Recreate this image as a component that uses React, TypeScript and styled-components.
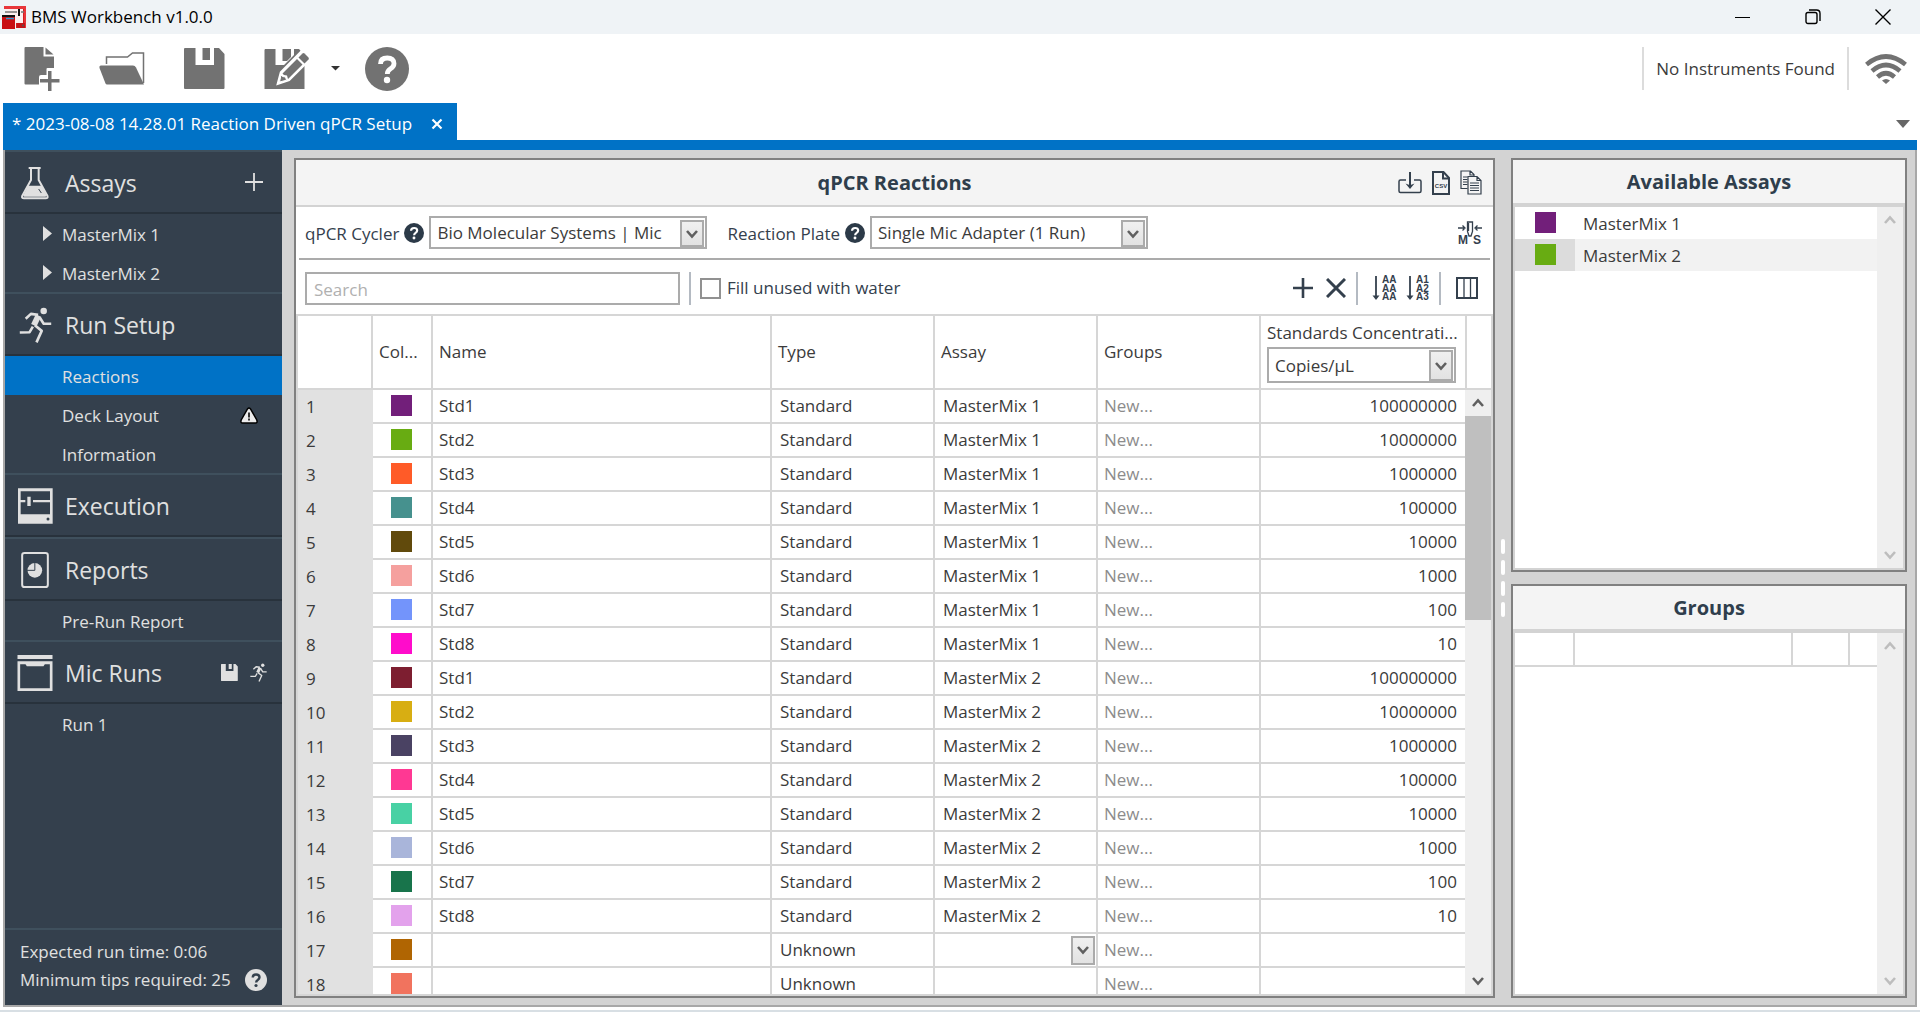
import React from "react";
import styled, { createGlobalStyle } from "styled-components";

const color = {
  accent: "#0072c6",
  navy: "#34404d",
  pale: "#e0e0e0",
  icon: "#727272",
  line: "#d3d3d3",
  field: "#ababab",
  frame: "#808080",
  text: "#3b3b3b",
};

const GlobalStyle = createGlobalStyle`
  *, *::before, *::after { box-sizing: border-box; }
  html, body, #root { height: 100%; }
  body { margin: 0; overflow: hidden; background: #fff; }
  body, button, input, select {
    font-family: "Open Sans", "Noto Sans", sans-serif;
    font-size: 17px;
    line-height: 24px;
    color: ${color.text};
  }
  button, input, select { margin: 0; padding: 0; border: 0; border-radius: 0; background: none; }
  svg { display: block; flex: none; }
  h1, h2, p, ul { margin: 0; padding: 0; font-size: inherit; font-weight: inherit; }
  ul { list-style: none; }
`;

const Window = styled.div`
  display: flex;
  flex-direction: column;
  height: 100vh;
  border-bottom: 2px solid #d8dfe4;
`;

const TitleBar = styled.header`
  display: flex;
  align-items: center;
  height: 34px;
  padding: 0 2px;
  gap: 5px;
  background: #eff3f6;
  color: #000;
  flex: none;
`;

const AppName = styled.h1`
  flex: 1;
`;

const WindowControls = styled.div`
  display: flex;
`;

const WindowButton = styled.button`
  display: grid;
  place-items: center;
  width: 70px;
  height: 34px;
`;

const Toolbar = styled.div`
  display: flex;
  align-items: center;
  height: 69px;
  padding-left: 20px;
  flex: none;
`;

const ToolButton = styled.button<{ $w: number; $gap?: number }>`
  display: grid;
  place-items: center;
  width: ${(p) => p.$w}px;
  height: 52px;
  margin-right: ${(p) => p.$gap ?? 0}px;
`;

const Status = styled.div`
  display: flex;
  align-items: center;
  height: 43px;
  margin-left: auto;
  border: solid #dcdcdc;
  border-width: 0 2px;
  padding: 0 12px;
`;

const Signal = styled.div`
  padding: 0 13px 0 16px;
`;

const TabStrip = styled.nav`
  display: flex;
  align-items: stretch;
  height: 47px;
  margin: 0 3px;
  border-bottom: 10px solid ${color.accent};
  flex: none;
`;

const Tab = styled.div`
  display: flex;
  align-items: center;
  width: 454px;
  padding: 4px 14px 0 9px;
  justify-content: space-between;
  background: ${color.accent};
  color: #fff;
  white-space: nowrap;
`;

const TabMenu = styled.button`
  margin-left: auto;
  padding: 4px 7px 0;
`;

const Workspace = styled.main`
  display: grid;
  grid-template-columns: 277px minmax(0, 1fr) 396px;
  grid-template-rows: minmax(0, 1fr);
  flex: 1;
  min-height: 0;
  margin: 0 3px 3px;
  border: 2px solid #a8a8a8;
  border-top: 0;
  background: ${color.line};
  padding-right: 8px;
`;

/* Sidebar */

const Sidebar = styled.aside`
  display: flex;
  flex-direction: column;
  background: ${color.navy};
  color: ${color.pale};
`;

const SectionHead = styled.div`
  display: flex;
  align-items: center;
  height: 64px;
  border-top: 2px solid #3f505d;
  border-bottom: 2px solid #28323c;
  padding-right: 9px;
`;

const SectionIcon = styled.span`
  display: grid;
  place-items: center;
  width: 60px;
  padding-top: 1px;
`;

const SectionName = styled.h2`
  flex: 1;
  font-size: 23px;
  line-height: 32px;
  padding-top: 2px;
`;

const SideButton = styled.button<{ $w?: number }>`
  display: grid;
  place-items: center;
  width: ${(p) => p.$w ?? 29}px;
  height: 32px;
`;

const SideItem = styled.a<{ $active?: boolean }>`
  display: flex;
  align-items: center;
  height: 39px;
  padding: 2px 24px 0 33px;
  color: ${color.pale};
  text-decoration: none;
  background: ${(p) => (p.$active ? color.accent : "transparent")};
`;

const Marker = styled.span`
  width: 24px;
  flex: none;
`;

const ItemText = styled.span`
  flex: 1;
`;

const SideFooter = styled.footer`
  margin-top: auto;
  height: 77px;
  border-top: 2px solid #3f505d;
  padding: 8px 15px 0 15px;
  line-height: 28px;
`;

const FooterLine = styled.p`
  display: flex;
  align-items: center;
  justify-content: space-between;
`;

/* Panels */

const Center = styled.div`
  display: grid;
  grid-template-columns: minmax(0, 1fr) 16px;
  padding: 8px 0 7px 12px;
  min-height: 0;
`;

const Panel = styled.section`
  display: flex;
  flex-direction: column;
  min-height: 0;
  border: 2px solid ${color.frame};
  background: #fff;
`;

const PanelHead = styled.div<{ $rule: number }>`
  display: grid;
  grid-template-columns: 1fr auto 1fr;
  align-items: center;
  height: 47px;
  border-bottom: ${(p) => p.$rule}px solid ${color.line};
  background: #f4f4f4;
  flex: none;
`;

const PanelTitle = styled.h2`
  grid-column: 2;
  padding-top: 1px;
  font-size: 20px;
  font-weight: 700;
  color: #2f3e4c;
  line-height: 28px;
`;

const HeadActions = styled.div`
  display: flex;
  justify-content: flex-end;
  gap: 6px;
  padding-right: 10px;
`;

const IconButton = styled.button<{ $w?: number }>`
  display: grid;
  place-items: center;
  width: ${(p) => p.$w ?? 24}px;
  height: 28px;
`;

const Options = styled.div`
  display: flex;
  align-items: center;
  gap: 20px;
  height: 53px;
  margin: 0 3px;
  padding: 0 8px 0 6px;
  border-bottom: 2px solid ${color.field};
  flex: none;
  color: ${color.navy};
`;

const OptionField = styled.div`
  display: flex;
  align-items: center;
  gap: 5px;
`;

const OptionLabel = styled.label`
  padding-top: 2px;
  white-space: nowrap;
`;

const SelectBox = styled.span<{ $w?: number; $h: number; $bare?: boolean }>`
  display: grid;
  grid-template-columns: 1fr auto;
  align-items: ${(p) => (p.$bare ? "center" : "end")};
  width: ${(p) => (p.$w ? `${p.$w}px` : "100%")};
  height: ${(p) => p.$h}px;
  padding-right: 1px;
  border: ${(p) => (p.$bare ? "0" : `2px solid ${color.field}`)};
  background: #fff;
`;

const NativeSelect = styled.select`
  grid-area: 1 / 1 / 2 / 3;
  align-self: stretch;
  width: 100%;
  padding: 1px 0 0 6px;
  appearance: none;
  outline: 0;
`;

const DropArrow = styled.span<{ $h: number }>`
  grid-area: 1 / 2;
  display: grid;
  place-items: center;
  width: 24px;
  height: ${(p) => p.$h}px;
  border: 2px solid ${color.field};
  background: linear-gradient(#f0f0f0, #e2e2e2);
  pointer-events: none;
`;

const Filters = styled.div`
  display: flex;
  align-items: center;
  height: 54px;
  padding: 2px 9px 0 9px;
  flex: none;
`;

const SearchBox = styled.input`
  width: 375px;
  height: 33px;
  padding: 2px 7px 0;
  border: 2px solid ${color.field};
  &::placeholder { color: #b0b0b0; opacity: 1; }
`;

const Rule = styled.span<{ $before?: number }>`
  width: 2px;
  height: 33px;
  margin: 0 9px 0 ${(p) => p.$before ?? 9}px;
  background: #b4bac2;
`;

const CheckLabel = styled.label`
  display: flex;
  align-items: center;
  gap: 6px;
  color: ${color.navy};
`;

const Check = styled.input`
  appearance: none;
  width: 21px;
  height: 21px;
  border: 2px solid #919191;
  background: #fff;
`;

const Actions = styled.div`
  display: flex;
  align-items: center;
  margin-left: auto;
`;

/* Reactions table */

const GridFrame = styled.div`
  display: flex;
  flex: 1;
  min-height: 0;
  border: 2px solid #d6d6d6;
`;

const GridClip = styled.div`
  flex: 1;
  min-width: 0;
  overflow: hidden;
`;

const Table = styled.table`
  width: 100%;
  table-layout: fixed;
  border-collapse: separate;
  border-spacing: 0;
  line-height: 16px;
`;

const Col = styled.col<{ $w?: number }>`
  width: ${(p) => (p.$w ? `${p.$w}px` : "auto")};
`;

const Th = styled.th`
  height: 74px;
  padding: 0 6px;
  border: solid #d6d6d6;
  border-width: 0 2px 2px 0;
  text-align: left;
  font-weight: 400;
  white-space: nowrap;
  &:last-child { border-right: 0; padding-right: 9px; }
`;

const UnitLabel = styled.label`
  display: block;
  line-height: 24px;
  padding-bottom: 2px;
`;

const RowHead = styled.th`
  height: 34px;
  padding: 0 0 0 8px;
  background: #e1e1e1;
  text-align: left;
  font-weight: 400;
`;

const Td = styled.td<{ $muted?: boolean; $pad?: number }>`
  height: 34px;
  padding: 0 0 0 ${(p) => p.$pad ?? 8}px;
  border: solid #d6d6d6;
  border-width: 0 2px 2px 0;
  color: ${(p) => (p.$muted ? "#8c8c8c" : color.text)};
  white-space: nowrap;
  &:last-child { border-right: 0; padding-right: 8px; text-align: right; }
`;

const SwatchTd = styled(Td)`
  padding: 5px 0 0 18px;
  vertical-align: top;
`;

const Swatch = styled.span<{ $c: string }>`
  display: block;
  width: 21px;
  height: 21px;
  background: ${(p) => p.$c};
`;

const ScrollSide = styled.div`
  display: flex;
  flex-direction: column;
  width: 26px;
  flex: none;
`;

const ScrollHead = styled.div`
  height: 74px;
  border: solid #d6d6d6;
  border-width: 0 0 2px 2px;
  flex: none;
`;

const ScrollTrack = styled.div`
  display: flex;
  flex-direction: column;
  flex: 1;
  background: #efefef;
`;

const ScrollButton = styled.button`
  display: grid;
  place-items: center;
  width: 26px;
  height: 26px;
  flex: none;
`;

const ThumbArea = styled.div`
  flex: 1;
  min-height: 0;
`;

const Thumb = styled.div`
  height: 37%;
  background: #bfbfbf;
`;

const Splitter = styled.div`
  display: flex;
  flex-direction: column;
  align-items: center;
  justify-content: center;
  gap: 6px;
`;

const Grip = styled.span`
  width: 4px;
  height: 15px;
  border-radius: 2px;
  background: #fff;
`;

const RightColumn = styled.div`
  display: grid;
  grid-template-rows: 1fr 1fr;
  gap: 12px;
  padding: 8px 0 7px;
  min-height: 0;
`;

const SideList = styled.div`
  display: flex;
  flex: 1;
  min-height: 0;
  border: 2px solid ${color.line};
  border-top: 0;
`;

const AssayList = styled.ul`
  flex: 1;
`;

const AssayRow = styled.li<{ $on?: boolean }>`
  display: flex;
  height: 32px;
  background: ${(p) => (p.$on ? "#f2f2f2" : "#fff")};
`;

const AssayKey = styled.span<{ $on?: boolean }>`
  display: flex;
  width: 60px;
  padding: 5px 0 0 20px;
  background: ${(p) => (p.$on ? "#dcdcdc" : "transparent")};
`;

const AssayName = styled.span`
  padding: 5px 0 0 8px;
`;

const GroupsGrid = styled.div`
  flex: 1;
`;

const GroupTh = styled.th`
  height: 34px;
  padding: 0;
  border: solid #d6d6d6;
  border-width: 0 2px 2px 0;
  &:last-child { border-right: 0; }
`;

/* Icons */

const Chevron = ({ up, faint }: { up?: boolean; faint?: boolean }) => (
  <svg width="12" height="10" viewBox="0 0 12 10" fill="none" stroke={faint ? "#bdbdbd" : "#606060"} strokeWidth="2.6">
    <path d={up ? "M1 8l5-5.5L11 8" : "M1 2l5 5.5L11 2"} />
  </svg>
);

const AppIcon = () => (
  <svg width="24" height="24" viewBox="0 0 24 24">
    <path d="M2 1h21v22h-9v-5h6V4H2z" fill="#d61b1f" />
    <path d="M4 3h17v15H4z" fill="#fbeff0" />
    <path d="M2 1h22v3H2zM22 2h2v21h-2z" fill="#e8363a" />
    <path d="M0 12h13v12H0z" fill="#c90f13" />
    <path d="M3 7h12M19 7h3" stroke="#777" strokeWidth="1.5" />
    <path d="M0 11h13" stroke="#111" strokeWidth="2" />
    <path d="M17 4v7" stroke="#111" strokeWidth="2" />
    <path d="M4 13.500h8" stroke="#2a9bd6" strokeWidth="1.500" />
    <path d="M15 18h8v5h-8z" fill="#c31519" />
    <circle cx="21" cy="20.500" r="1" fill="#555" />
  </svg>
);

const NewFileIcon = () => (
  <svg width="36" height="46" viewBox="0 0 36 46" fill={color.icon}>
    <path d="M1.500 1h18v9.500H30V22h-6.500q-1 0-1 1v6H17q-2 0-2 2v7.500H1.500Q.5 38.500.5 37.500V2Q.5 1 1.500 1z" />
    <path d="M21.500 1.500l8 7h-8z" />
    <path d="M24 25h3.500v8h8v3.500h-8V45H24v-8.500h-8V33h8z" />
  </svg>
);

const FolderIcon = () => (
  <svg width="46" height="34" viewBox="0 0 46 34">
    <path d="M7.500 12V5h21l5-4h11v30" fill="none" stroke={color.icon} strokeWidth="1.500" />
    <path d="M2 13.500h32q2 0 3 2L45 32.500H8q-1 0-1.500-1L.5 16q-.5-2.500 1.500-2.500z" fill={color.icon} />
  </svg>
);

const SaveIcon = ({ s = 41, c = color.icon }: { s?: number; c?: string }) => (
  <svg width={s} height={s} viewBox="0 0 41 41" fill={c}>
    <path d="M1 0h10.500v17H30V0h5l5.500 6v34Q40.500 41 39.500 41H1Q0 41 0 40V1Q0 0 1 0z" />
    <path d="M18.500 0H26v12h-7.500z" />
  </svg>
);

const SaveEditIcon = () => (
  <svg width="46" height="42" viewBox="0 0 46 42">
    <path d="M1 1h10.500v16H20l10-10V1h5l5.500 6v34H.5V2z" fill={color.icon} />
    <path d="M18.500 1H27v8l-4 4h-4.500z" fill={color.icon} />
    <path d="M14 35.500l3-11L37.500 3.500l8 8L25 32z" fill="#fff" stroke="#fff" strokeWidth="2.500" />
    <path d="M18.500 25.500L33 11l5.500 5.500L24 31l-1-3.500-3-.5z" fill={color.icon} />
    <path d="M34.500 9.500l4-4q1-1 2 0l4 4q.7 1 0 2l-4 4z" fill={color.icon} />
    <path d="M17 27l-1.500 7 7-1.800-1-3.200-3-.5z" fill={color.icon} stroke="#fff" />
  </svg>
);

const HelpIcon = ({ size, bg, fg }: { size: number; bg: string; fg: string }) => (
  <svg width={size} height={size} viewBox="0 0 44 44">
    <circle cx="22" cy="22" r="22" fill={bg} />
    <path d="M15.500 17q0-6 6.800-6 6.700 0 6.700 5.500 0 3-3.500 5.300-3.200 2-3.200 5.200" fill="none" stroke={fg} strokeWidth="4.800" />
    <circle cx="22" cy="33" r="3.200" fill={fg} />
  </svg>
);

const Runner = ({ w, h }: { w: number; h: number }) => (
  <svg width={w} height={h} viewBox="50 496 100 110" fill="none" stroke={color.pale} strokeWidth="8" strokeLinejoin="round">
    <circle cx="125" cy="508" r="10" fill={color.pale} stroke="none" />
    <path d="M70 532L86 517l22 3M113 528l12 19h23M92 556l-10 17-30 1M98 552l21 17-16 35" />
    <path d="M109 522L95 552" strokeWidth="18" />
  </svg>
);

const Flask = () => (
  <svg width="28" height="34" viewBox="64 75 84 102" fill="none" stroke={color.pale} strokeWidth="6">
    <path d="M87 81h36M94 82v35L68 164q-3 8 5 8h65q8 0 5-8l-26-47V82" />
    <path d="M86 134h40l14 28q1 5-3 5H74q-4 0-3-4z" fill={color.pale} stroke="none" />
    <path d="M117 144l8 12" stroke={color.navy} strokeWidth="3" />
  </svg>
);

const ExecutionIcon = () => (
  <svg width="35" height="36" viewBox="52 51 105 108" fill={color.pale}>
    <path d="M52 52h104v106H52zM60 61v69h88V61z" fillRule="evenodd" />
    <path d="M56 87h18v7H56zM97 87h55v7H97zM80 77h10v28H80z" />
    <circle cx="142" cy="144" r="4.500" fill={color.navy} />
  </svg>
);

const ReportIcon = () => (
  <svg width="28" height="36" viewBox="64 243 83 108">
    <rect x="67" y="246" width="77" height="102" rx="7" fill="none" stroke={color.pale} strokeWidth="6" />
    <circle cx="105" cy="298" r="22" fill={color.pale} />
    <path d="M105 274v24H81" fill="none" stroke={color.navy} strokeWidth="3" />
  </svg>
);

const MicIcon = () => (
  <svg width="36" height="36" viewBox="53 552 107 108" fill={color.pale}>
    <path d="M54 552h105v12H54zM54 571h105v89H54zM62 580v72h89v-72h-15l-4 6H82l-4-6z" fillRule="evenodd" />
  </svg>
);

const WarningIcon = () => (
  <svg width="18" height="17" viewBox="0 0 18 17">
    <path d="M7.500 2q1.500-2 3 0L16.800 13q1 3-1.300 3h-13Q.2 16 1.200 13z" fill="#ececec" stroke="#000" strokeWidth="1.500" />
    <path d="M9 5.500v5M9 11.500v2" stroke="#222" strokeWidth="1.800" />
  </svg>
);

const WifiIcon = () => (
  <svg width="42" height="30" viewBox="0 0 42 30" fill="none" stroke={color.icon} strokeWidth="4.600">
    <path d="M1.500 10.500Q21-5.500 40.500 10.500M7 17q14-12 28 0M12.500 23Q21 15.500 29.500 23" />
    <path d="M17 26.500q4-3 8 0L21 30z" fill={color.icon} stroke="none" />
  </svg>
);

const ImportIcon = () => (
  <svg width="24" height="22" viewBox="0 0 24 22" fill="none" stroke={color.navy} strokeWidth="1.500">
    <path d="M8 8H2.500Q1 8 1 9.500V19q0 1.500 1.500 1.500h19Q23 20.500 23 19V9.500Q23 8 21.500 8H16" />
    <path d="M12 0v14" strokeWidth="2" />
    <path d="M7.500 11.500L12 17l4.500-5.500-4.500 1.800z" fill={color.navy} stroke="none" />
  </svg>
);

const CsvIcon = () => (
  <svg width="18" height="24" viewBox="0 0 18 24">
    <path d="M1 1h10.500L17 7v16H1z" fill="none" stroke={color.navy} strokeWidth="2" />
    <path d="M11 1v6.500h6" fill="none" stroke={color.navy} strokeWidth="2" />
    <text x="9" y="17" textAnchor="middle" fontFamily="Liberation Sans, sans-serif" fontWeight="700" fontSize="6" fill={color.navy}>CSV</text>
  </svg>
);

const CopyIcon = () => (
  <svg width="22" height="25" viewBox="0 0 22 25" fill="none" stroke={color.navy} strokeWidth="1.200">
    <path d="M7.500 18.500H1V1h9.500L14 4.500V6M10 1v4h4M3 7h4.500M3 9.500h4.500M3 12h4.500M3 14.500h4.500" />
    <path d="M8 6.500h9l4 4V24H8zM17 6.500v4h4M10 13h9M10 15.500h9M10 18h9M10 20.500h9" />
  </svg>
);

const MasterSampleIcon = () => (
  <svg width="24" height="24" viewBox="0 0 24 24" fill="none" stroke={color.navy} strokeWidth="1.300">
    <path d="M9.500 1h5v9.500L13 15h-2l-1.500-4.500zM10.500 2v8M0 7h6M24 7h-6M4.500 4.500L7 7 4.500 9.500M19.500 4.500L17 7l2.500 2.500" />
    <text x="0" y="23" fontFamily="Liberation Sans, sans-serif" fontWeight="700" fontSize="12" fill={color.navy} stroke="none">M</text>
    <text x="15" y="23" fontFamily="Liberation Sans, sans-serif" fontWeight="700" fontSize="12" fill={color.navy} stroke="none">S</text>
  </svg>
);

const SortIcon = ({ rows }: { rows: string[] }) => (
  <svg width="25" height="26" viewBox="0 0 25 26">
    <path d="M4 1v20" stroke={color.navy} strokeWidth="1.800" />
    <path d="M.5 20.500h7L4 25z" fill={color.navy} />
    {rows.map((r, i) => (
      <text key={i} x="10" y={8 + i * 8.500} fontFamily="Liberation Sans, sans-serif" fontWeight="700" fontSize="10" fill={color.navy}>{r}</text>
    ))}
  </svg>
);

const ColumnsIcon = () => (
  <svg width="22" height="22" viewBox="0 0 22 22" fill="none" stroke={color.navy}>
    <rect x="1" y="1" width="20" height="20" strokeWidth="2" />
    <path d="M8 1v20M14.500 1v20" strokeWidth="1.300" />
  </svg>
);

/* Pieces */

type SelectProps = { id?: string; value: string; w?: number; h: number; arrow: number; label?: string; bare?: boolean };

const Select = ({ id, value, w, h, arrow, label, bare }: SelectProps) => (
  <SelectBox $w={w} $h={h} $bare={bare}>
    <NativeSelect id={id} aria-label={label} defaultValue={value}>
      <option value={value}>{value}</option>
    </NativeSelect>
    <DropArrow $h={arrow}><Chevron /></DropArrow>
  </SelectBox>
);

const ScrollBar = ({ thumb, head }: { thumb?: boolean; head?: boolean }) => (
  <ScrollSide>
    {head && <ScrollHead />}
    <ScrollTrack>
      <ScrollButton aria-label="Scroll up"><Chevron up faint={!thumb} /></ScrollButton>
      <ThumbArea>{thumb && <Thumb />}</ThumbArea>
      <ScrollButton aria-label="Scroll down"><Chevron faint={!thumb} /></ScrollButton>
    </ScrollTrack>
  </ScrollSide>
);

const Option = ({ id, label, value }: { id: string; label: string; value: string }) => (
  <OptionField>
    <OptionLabel htmlFor={id}>{label}</OptionLabel>
    <HelpIcon size={20} bg="#2c3a48" fg="#fff" />
    <Select id={id} value={value} w={278} h={33} arrow={27} />
  </OptionField>
);

const Section = ({ icon, name, children }: { icon: React.ReactNode; name: string; children?: React.ReactNode }) => (
  <SectionHead>
    <SectionIcon>{icon}</SectionIcon>
    <SectionName>{name}</SectionName>
    {children}
  </SectionHead>
);

const Item = ({ name, active, arrow, warn }: { name: string; active?: boolean; arrow?: boolean; warn?: boolean }) => (
  <SideItem href="#" $active={active}>
    <Marker>
      {arrow && <svg width="24" height="20" viewBox="0 0 24 20"><path d="M5 1l9 7.500L5 16z" fill={color.pale} /></svg>}
    </Marker>
    <ItemText>{name}</ItemText>
    {warn && <WarningIcon />}
  </SideItem>
);

const swatches = [
  "#721f7a", "#68ac12", "#ff5b28", "#46918e", "#614a0c", "#f5a09e", "#7394fb", "#ff0ccb", "#7d1e30",
  "#d8ae12", "#4a4263", "#ff3893", "#48d1a4", "#a9b5da", "#18744b", "#e3a2ec", "#b06502", "#f1735e",
];

const rows = swatches.map((c, i) => ({
  c,
  name: i < 16 ? `Std${(i % 8) + 1}` : "",
  type: i < 16 ? "Standard" : "Unknown",
  assay: i < 16 ? `MasterMix ${i < 8 ? 1 : 2}` : "",
  conc: i < 16 ? String(10 ** (8 - (i % 8))) : "",
}));

const ReactionsTable = () => (
  <GridFrame>
    <GridClip>
      <Table>
        <colgroup>
          <Col $w={75} /><Col $w={60} /><Col /><Col $w={163} /><Col $w={163} /><Col $w={163} /><Col $w={204} />
        </colgroup>
        <thead>
          <tr>
            <Th /><Th>Col...</Th><Th>Name</Th><Th>Type</Th><Th>Assay</Th><Th>Groups</Th>
            <Th>
              <UnitLabel htmlFor="unit">Standards Concentrati...</UnitLabel>
              <Select id="unit" value="Copies/µL" h={36} arrow={31} />
            </Th>
          </tr>
        </thead>
        <tbody>
          {rows.map((r, i) => (
            <tr key={i}>
              <RowHead scope="row">{i + 1}</RowHead>
              <SwatchTd><Swatch $c={r.c} /></SwatchTd>
              <Td $pad={6}>{r.name}</Td>
              <Td>{r.type}</Td>
              <Td $pad={i === 16 ? 0 : 8}>{i === 16 ? <Select bare value="" label="Assay" h={32} arrow={29} /> : r.assay}</Td>
              <Td $muted $pad={6}>New...</Td>
              <Td>{r.conc}</Td>
            </tr>
          ))}
        </tbody>
      </Table>
    </GridClip>
    <ScrollBar thumb head />
  </GridFrame>
);

export default function App() {
  return (
    <Window>
      <GlobalStyle />
      <TitleBar>
        <AppIcon />
        <AppName>BMS Workbench v1.0.0</AppName>
        <WindowControls>
          <WindowButton aria-label="Minimize"><svg width="16" height="16" viewBox="0 0 16 16"><path d="M0 8.500h15" stroke="#000" /></svg></WindowButton>
          <WindowButton aria-label="Restore">
            <svg width="16" height="16" viewBox="0 0 16 16" fill="none" stroke="#000" strokeWidth="1.400"><rect x="1" y="3.500" width="11" height="11" rx="2" /><path d="M4 1h7.500Q15 1 15 4.500V12" /></svg>
          </WindowButton>
          <WindowButton aria-label="Close"><svg width="16" height="16" viewBox="0 0 16 16"><path d="M.5.5l15 15M15.500.5l-15 15" stroke="#000" strokeWidth="1.400" /></svg></WindowButton>
        </WindowControls>
      </TitleBar>
      <Toolbar>
        <ToolButton $w={44} $gap={35} aria-label="New"><NewFileIcon /></ToolButton>
        <ToolButton $w={46} $gap={36} aria-label="Open"><FolderIcon /></ToolButton>
        <ToolButton $w={46} $gap={37} aria-label="Save"><SaveIcon /></ToolButton>
        <ToolButton $w={46} $gap={14} aria-label="Save as"><SaveEditIcon /></ToolButton>
        <ToolButton $w={22} $gap={19} aria-label="Save options"><svg width="9" height="5" viewBox="0 0 9 5"><path d="M0 0h9L4.500 4.500z" fill="#333" /></svg></ToolButton>
        <ToolButton $w={44} aria-label="Help"><HelpIcon size={44} bg={color.icon} fg="#fff" /></ToolButton>
        <Status>No Instruments Found</Status>
        <Signal><WifiIcon /></Signal>
      </Toolbar>
      <TabStrip>
        <Tab>
          * 2023-08-08 14.28.01 Reaction Driven qPCR Setup
          <button aria-label="Close tab"><svg width="12" height="12" viewBox="0 0 12 12"><path d="M1.500 1.500l9 9M10.500 1.500l-9 9" stroke="#fff" strokeWidth="2.200" /></svg></button>
        </Tab>
        <TabMenu aria-label="Open tabs"><svg width="14" height="8" viewBox="0 0 14 8"><path d="M0 0h14L7 8z" fill="#666" /></svg></TabMenu>
      </TabStrip>
      <Workspace>
        <Sidebar>
          <Section icon={<Flask />} name="Assays">
            <SideButton $w={38} aria-label="Add assay"><svg width="18" height="18" viewBox="0 0 18 18"><path d="M9 0v18M0 9h18" stroke={color.pale} strokeWidth="1.800" /></svg></SideButton>
          </Section>
          <Item name="MasterMix 1" arrow />
          <Item name="MasterMix 2" arrow />
          <Section icon={<Runner w={33} h={36} />} name="Run Setup" />
          <Item name="Reactions" active />
          <Item name="Deck Layout" warn />
          <Item name="Information" />
          <Section icon={<ExecutionIcon />} name="Execution" />
          <Section icon={<ReportIcon />} name="Reports" />
          <Item name="Pre-Run Report" />
          <Section icon={<MicIcon />} name="Mic Runs">
            <SideButton aria-label="Save runs"><SaveIcon s={17} c={color.pale} /></SideButton>
            <SideButton aria-label="Start runs"><Runner w={17} h={19} /></SideButton>
          </Section>
          <Item name="Run 1" />
          <SideFooter>
            <FooterLine>Expected run time: 0:06</FooterLine>
            <FooterLine>Minimum tips required: 25 <HelpIcon size={22} bg={color.pale} fg={color.navy} /></FooterLine>
          </SideFooter>
        </Sidebar>
        <Center>
          <Panel>
            <PanelHead $rule={2}>
              <PanelTitle>qPCR Reactions</PanelTitle>
              <HeadActions>
                <IconButton $w={26} aria-label="Import"><ImportIcon /></IconButton>
                <IconButton aria-label="Export CSV"><CsvIcon /></IconButton>
                <IconButton aria-label="Copy"><CopyIcon /></IconButton>
              </HeadActions>
            </PanelHead>
            <Options>
              <Option id="cycler" label="qPCR Cycler" value="Bio Molecular Systems | Mic" />
              <Option id="plate" label="Reaction Plate" value="Single Mic Adapter (1 Run)" />
              <Actions><IconButton aria-label="Master mix and samples"><MasterSampleIcon /></IconButton></Actions>
            </Options>
            <Filters>
              <SearchBox type="search" placeholder="Search" aria-label="Search" />
              <Rule />
              <CheckLabel><Check type="checkbox" />Fill unused with water</CheckLabel>
              <Actions>
                <IconButton $w={33} aria-label="Add"><svg width="20" height="20" viewBox="0 0 20 20"><path d="M10 0v20M0 10h20" stroke={color.navy} strokeWidth="2.600" /></svg></IconButton>
                <IconButton $w={33} aria-label="Remove"><svg width="20" height="20" viewBox="0 0 20 20"><path d="M1 1l18 18M19 1L1 19" stroke={color.navy} strokeWidth="3" /></svg></IconButton>
                <Rule $before={4} />
                <IconButton $w={34} aria-label="Sort by name"><SortIcon rows={["AA", "AA", "AA"]} /></IconButton>
                <IconButton $w={34} aria-label="Sort by position"><SortIcon rows={["A1", "A2", "A3"]} /></IconButton>
                <Rule $before={4} />
                <IconButton $w={34} aria-label="Columns"><ColumnsIcon /></IconButton>
              </Actions>
            </Filters>
            <ReactionsTable />
          </Panel>
          <Splitter><Grip /><Grip /><Grip /><Grip /></Splitter>
        </Center>
        <RightColumn>
          <Panel>
            <PanelHead $rule={4}><PanelTitle>Available Assays</PanelTitle></PanelHead>
            <SideList>
              <AssayList>
                <AssayRow><AssayKey><Swatch $c="#721f7a" /></AssayKey><AssayName>MasterMix 1</AssayName></AssayRow>
                <AssayRow $on><AssayKey $on><Swatch $c="#68ac12" /></AssayKey><AssayName>MasterMix 2</AssayName></AssayRow>
              </AssayList>
              <ScrollBar />
            </SideList>
          </Panel>
          <Panel>
            <PanelHead $rule={4}><PanelTitle>Groups</PanelTitle></PanelHead>
            <SideList>
              <GroupsGrid>
                <Table>
                  <colgroup><Col $w={60} /><Col /><Col $w={57} /><Col $w={27} /></colgroup>
                  <thead><tr><GroupTh /><GroupTh /><GroupTh /><GroupTh /></tr></thead>
                </Table>
              </GroupsGrid>
              <ScrollBar />
            </SideList>
          </Panel>
        </RightColumn>
      </Workspace>
    </Window>
  );
}
